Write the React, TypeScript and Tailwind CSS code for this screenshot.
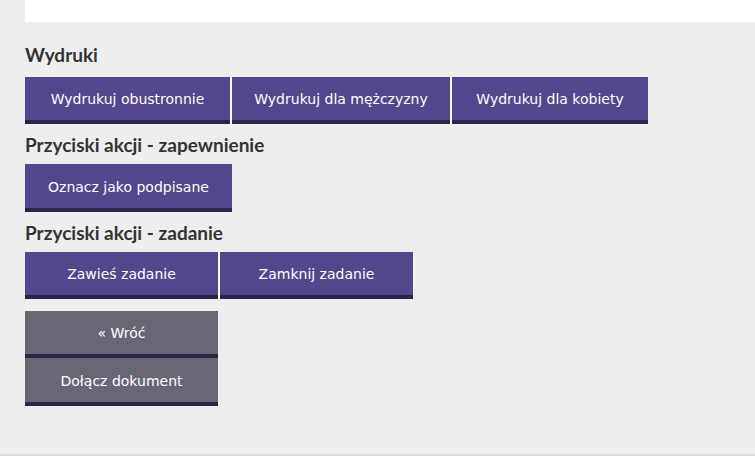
const purple = "bg-[#52468c]";

function Btn({ label, w, gray, sep, tall }: { label: string; w: string; gray?: boolean; sep?: boolean; tall?: boolean }) {
  return (
    <button
      className={`${w} ${tall ? "h-[48px]" : "h-[47px]"} flex flex-col ${sep ? "border-r-2 border-white" : ""}`}
    >
      <span
        className={`flex-1 w-full flex items-center justify-center pt-[2px] text-white text-[14px] ${
          gray ? "bg-[#686677]" : purple
        }`}
        style={{ fontFamily: '"DejaVu Sans", Verdana, sans-serif' }}
      >
        {label}
      </span>
      <span className="h-[4px] w-full bg-[#2c2549]" />
    </button>
  );
}

function Heading({ children, className }: { children: string; className?: string }) {
  return (
    <h2
      className={`text-[19px] leading-[26px] font-bold text-[#333333] ${className ?? ""}`}
      style={{ fontFamily: "Lato, sans-serif" }}
    >
      {children}
    </h2>
  );
}

export default function App() {
  return (
    <div className="h-[456px] w-[755px] bg-[#eeeeee] border-b-2 border-[#dcdcdc] box-border">
      <div className="ml-[25px] h-[22px] bg-white" />
      <div className="px-[25px] pt-[20px]">
        <Heading className="mb-[9px]">Wydruki</Heading>
        <div className="flex">
          <Btn label="Wydrukuj obustronnie" w="w-[207px]" sep />
          <Btn label="Wydrukuj dla mężczyzny" w="w-[220px]" sep />
          <Btn label="Wydrukuj dla kobiety" w="w-[196px]" />
        </div>

        <Heading className="mt-[8px] mb-[6px]">Przyciski akcji - zapewnienie</Heading>
        <div className="flex">
          <Btn label="Oznacz jako podpisane" w="w-[207px]" tall />
        </div>

        <Heading className="mt-[8px] mb-[6px]">Przyciski akcji - zadanie</Heading>
        <div className="flex">
          <Btn label="Zawieś zadanie" w="w-[195px]" sep />
          <Btn label="Zamknij zadanie" w="w-[193px]" />
        </div>

        <div className="mt-[12px] flex flex-col w-[193px]">
          <Btn label="« Wróć" w="w-[193px]" gray />
          <Btn label="Dołącz dokument" w="w-[193px]" gray tall />
        </div>
      </div>
    </div>
  );
}
